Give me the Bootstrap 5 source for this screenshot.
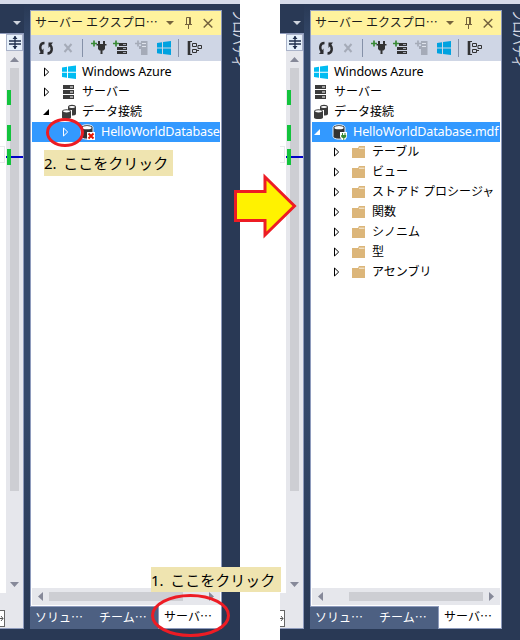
<!DOCTYPE html>
<html lang="ja">
<head>
<meta charset="utf-8">
<meta name="viewport" content="width=device-width, initial-scale=1">
<title>サーバー エクスプローラー</title>
<link href="https://cdn.jsdelivr.net/npm/bootstrap@5.3.0/dist/css/bootstrap.min.css" rel="stylesheet">
<style>
body{width:520px;height:640px;font-family:"Noto Sans","Noto Sans CJK JP",sans-serif;font-size:12px;line-height:20px;color:#000;background:#fff}
svg{display:block;flex:none}
.scene{width:240px;height:640px;background:#293955;border-top:4px solid #d6dbe9}
.editor{width:24px;height:625px}
.editor-menu{height:29px;padding:17px 0 0 13px}
.editor-body{height:596px;border:solid #8e9bbc;border-width:1px 1px 1px 0;background:#e6e7ec}
.code-edge{width:6px;flex:none}
.code-area{height:559px;background:#fff;padding-top:112px}
.code-box{height:17px;width:5px;border:1px solid #e9e9ec;border-left:0}
.corner-box{height:17px;width:5px;margin-top:17px;border:1px solid #666;border-left:0;background:#fff;padding-top:5px}
.split-btn{height:17px;width:17px;background:#e6f0fa;border:1px solid #aab3c9;padding-left:1px}
.splitter{width:6px;height:625px;background:linear-gradient(#293955 0,#34496b 40px,#34496b 400px,#293955)}
.panel-box{width:192px;margin-top:6px;height:619px}
.frame{height:596px;border:1px solid #8e9bbc;border-bottom:0;background:#fff}
.titlebar{height:24px;background:#fff29d;padding-left:4px;line-height:24px;color:#1b1b1b}
.title-text{width:130px}
.tools{height:26px;background:#cfd6e5}
.tree{height:527px;padding:1px 1px 0 1px;background:#fff}
.tree-row{height:20px}
.tree-row.sel{background:#3399ff;color:#fff}
.caret{width:8px;margin-right:10px}
.pic{width:16px;margin-right:5px}
.lv1{padding-left:11px}.lv2{padding-left:30px}
.shifted .lv1{padding-left:1px}.shifted .lv2{padding-left:2px}.shifted .lv3{padding-left:21px}
.azure{font-size:12.6px;letter-spacing:-.1px}
.dbname{font-size:12.6px;letter-spacing:-.16px}
.hbar{height:17px;margin:0 1px;background:#e6e7ec}
.hthumb{height:9px;width:134px;background:#cdced3}
.tabs{height:23px;background:#4d6082;border-top:1px solid #8e9bbc;color:#fff;line-height:22px}
.tab-a{width:64px;padding-left:5px}
.tab-on{width:63px;height:23px;margin-top:-1px;padding-left:5px;background:#fff;color:#000;border:1px solid #8e9bbc;border-top:0}
.side{width:18px;height:80px;padding:5px 0 0 9px}
.side span{writing-mode:vertical-rl;text-orientation:sideways;line-height:16px;font-size:13px;letter-spacing:-1.2px;color:#d4d8e2;white-space:nowrap}
.marks{left:0;top:0;pointer-events:none}
.note{background:#efe4b0;line-height:26px;font-size:15px;word-spacing:2.7px;white-space:nowrap}
.note-a{left:44px;top:150px;width:129px;height:26px}
.note-b{left:151px;top:567px;width:130px;height:25px}
</style>
<script src="https://cdn.jsdelivr.net/npm/bootstrap@5.3.0/dist/js/bootstrap.bundle.min.js"></script>
</head>
<body class="position-relative overflow-hidden">
<svg width="0" height="0" class="position-absolute">
<defs>
<symbol id="closed" viewBox="0 0 8 10"><path d="M1.500 1v8L5.700 5z" fill="none" stroke="currentColor"/></symbol>
<symbol id="open" viewBox="0 0 8 10"><path d="M6 2v6H0z" fill="currentColor"/></symbol>
<symbol id="win" viewBox="0 0 16 16"><path d="M1 3.500l5-.8v5H1zM7 2.500L15 1.400v6.300H7zM1 8.700h5v5l-5-.8zM7 8.700h8V15l-8-1.100z"/></symbol>
<symbol id="server" viewBox="0 0 16 16"><path fill="#3c3c3c" d="M2 1h11v4H2zM2 6h11v4H2zM2 11h11v4H2z"/><path d="M9 3h3M9 8h3M9 13h3" stroke="#fff"/></symbol>
<symbol id="data" viewBox="0 0 16 16"><path fill="#3c3c3c" d="M7 3c0-3 8-3 8 0v7c0 1.500-4 1.500-4 1.500V6H7z"/><ellipse cx="11" cy="2.900" rx="3" ry="1" fill="#fff"/><path fill="#3c3c3c" d="M1 7.500c0-3 9-3 9 0v6c0 2-9 2-9 0z"/><ellipse cx="5.500" cy="7.300" rx="3.400" ry="1.100" fill="#fff"/></symbol>
<symbol id="db" viewBox="0 0 16 16"><path d="M1 3.500C1-.2 13-.2 13 3.500v9c0 3.500-12 3.500-12 0z" fill="#333" stroke="#e9f3ff"/><ellipse cx="7" cy="3.700" rx="4.600" ry="1.600" fill="#fff"/></symbol>
<symbol id="dbx" viewBox="0 0 16 16"><use href="#db"/><path d="M7 8h8v8H7z" fill="#fff"/><path d="M8.500 9.500l5 5m0-5l-5 5" stroke="#e51400" stroke-width="2"/></symbol>
<symbol id="dbok" viewBox="0 0 16 16"><use href="#db"/><path d="M8 8h7v5l-2 3h-3l-2-3z" fill="#fff"/><path d="M9.200 11h5v2l-1.500 1h-2l-1.500-1zM10 9h1v2h-1zM12.500 9h1v2h-1zM11.300 14h1v2h-1z" fill="#388a34"/></symbol>
<symbol id="folder" viewBox="0 0 16 16"><path fill="#dcb67a" d="M1 4h6l1-2h6v12H1z"/><path d="M8 4.200h5.500" stroke="#fff" stroke-width=".8"/></symbol>
<symbol id="titleicons" viewBox="0 0 54 24"><g fill="none" stroke="#75633d"><path d="M21.500 13V6.500h4V13M24.500 7v6M20 13.500h7M23.500 14v4"/><path d="M38.700 8l8.600 8.500m0-8.500l-8.600 8.500" stroke-width="1.500"/></g><path d="M1 10h8l-4 4z" fill="#75633d"/></symbol>
<symbol id="toolicons" viewBox="0 0 190 26">
<g fill="none" stroke="#2d2d30" stroke-width="2.400"><path d="M13.500 8c-5 0-5.500 6-2 9.500M16.500 18.500c5 0 5.500-6 2-9.500"/></g><path d="M12.500 13.500v5.500H8zM17.500 13V7.500H22z" fill="#2d2d30"/>
<path d="M33.500 9l7 8m0-8l-7 8" stroke="#a5abb8" stroke-width="2"/>
<path d="M51.500 4v18M147.500 4v18" stroke="#8591a8"/>
<path d="M60 8.500h6M63 5.500v6M82 8.500h6M85 5.500v6" stroke="#388a34" stroke-width="1.700"/>
<path d="M67 6h2v3h3V6h2v3h1.500v1.500H74V14l-1.500 1.500h-1V19h-2v-3.500h-1L67 14v-3.500h-1.500V9H67z" fill="#333"/>
<path d="M88 8h8v3h-8zM86 12h10v3H86zM86 16h10v3H86z" fill="#333"/><path d="M92 9.500h3M92 13.500h3M92 17.500h3" stroke="#cfd6e5" stroke-width=".7"/>
<path d="M110 6h6.500v14h-6.500v-6h-2v-3h2z" fill="#a5abb8"/><path d="M104 8.500h6M107 5.500v6" stroke="#a5abb8" stroke-width="1.700"/><path d="M111 8.500h4M111 11.500h4" stroke="#dfe3ec"/>
<path d="M126 8l5-.8v5.300h-5zM132 7l8-1v6.500h-8zM126 13.500h5v5.500l-5-.8zM132 13.500h8V20l-8-1z" fill="#00a2e0"/>
<path d="M158 6v14" stroke="#333" stroke-width="2.600"/><g fill="none" stroke="#333"><path d="M159 6.500h2M159 19.500h2M161.500 8.500h4v3h-4zM167 10.500h3.500v3H167zM161.500 14.500h4v3h-4zM166 15.500h2"/></g>
</symbol>
<symbol id="vbar" viewBox="0 0 17 577">
<path d="M4 17h9v423H4z" fill="#cdced3"/><path d="M4 11l4.500-5 4.500 5zM4 531h9l-4.500 5z" fill="#868999"/>
<path d="M1 39h4v15H1zM1 74h4v16H1zM1 98h4v16H1z" fill="#13c33c"/><path d="M0 106h1M5 106h12" stroke="#0000c8" stroke-width="2"/>
</symbol>
<symbol id="split" viewBox="0 0 14 15"><path d="M1 6h12M1 9h12M7 1v13" stroke="#1e2d4b" stroke-width="1.300"/><path d="M4.500 4L7 1l2.500 3zM4.500 11L7 14l2.500-3z" fill="#1e2d4b"/></symbol>
</defs>
</svg>

<main class="d-flex justify-content-between">
<section class="scene d-flex overflow-hidden">
  <div class="editor flex-shrink-0">
    <div class="editor-menu"><svg width="8" height="4"><path d="M0 0h8L4 4z" fill="#ced4dd"/></svg></div>
    <div class="editor-body d-flex">
      <div class="code-edge"><div class="code-area"><div class="code-box"></div></div><div class="corner-box"><svg width="4" height="5"><path d="M0 2.500h3M1 0l2 2.500L1 5" stroke="#555" fill="none"/></svg></div></div>
      <div class="flex-shrink-0"><div class="split-btn"><svg width="14" height="15"><use href="#split"/></svg></div><svg width="17" height="577"><use href="#vbar"/></svg></div>
    </div>
  </div>
  <div class="splitter flex-shrink-0"></div>
  <div class="panel-box flex-shrink-0">
    <div class="frame">
      <div class="titlebar d-flex"><div class="title-text text-nowrap">サーバー エクスプロ⋯</div><svg width="54" height="24"><use href="#titleicons"/></svg></div>
      <div class="tools"><svg width="190" height="26"><use href="#toolicons"/></svg></div>
      <div class="tree text-nowrap">
        <div class="tree-row lv1 d-flex align-items-center"><svg class="caret" height="10"><use href="#closed"/></svg><svg class="pic" height="16" fill="#00bcf2"><use href="#win"/></svg><span class="azure">Windows Azure</span></div>
        <div class="tree-row lv1 d-flex align-items-center"><svg class="caret" height="10"><use href="#closed"/></svg><svg class="pic" height="16"><use href="#server"/></svg><span>サーバー</span></div>
        <div class="tree-row lv1 d-flex align-items-center"><svg class="caret" height="10"><use href="#open"/></svg><svg class="pic" height="16"><use href="#data"/></svg><span>データ接続</span></div>
        <div class="tree-row lv2 sel d-flex align-items-center"><svg class="caret" height="10"><use href="#closed"/></svg><svg class="pic" height="16"><use href="#dbx"/></svg><span class="dbname">HelloWorldDatabase</span></div>
      </div>
      <div class="hbar d-flex align-items-center"><svg width="17" height="9"><path d="M11 0v9L6 4.500z" fill="#868999"/></svg><div class="hthumb"></div><svg class="ms-auto" width="11" height="9"><path d="M0 0v9l5-4.500z" fill="#868999"/></svg></div>
    </div>
    <div class="tabs d-flex text-nowrap"><div class="tab-a">ソリュ⋯</div><div class="tab-a">チーム⋯</div><div class="tab-on flex-grow-1">サーバ⋯</div></div>
  </div>
  <div class="side flex-shrink-0"><span>プロパティ</span></div>
</section>

<section class="scene d-flex overflow-hidden shifted">
  <div class="editor flex-shrink-0">
    <div class="editor-menu"><svg width="8" height="4"><path d="M0 0h8L4 4z" fill="#ced4dd"/></svg></div>
    <div class="editor-body d-flex">
      <div class="code-edge"><div class="code-area"><div class="code-box"></div></div><div class="corner-box"><svg width="4" height="5"><path d="M0 2.500h3M1 0l2 2.500L1 5" stroke="#555" fill="none"/></svg></div></div>
      <div class="flex-shrink-0"><div class="split-btn"><svg width="14" height="15"><use href="#split"/></svg></div><svg width="17" height="577"><use href="#vbar"/></svg></div>
    </div>
  </div>
  <div class="splitter flex-shrink-0"></div>
  <div class="panel-box flex-shrink-0">
    <div class="frame">
      <div class="titlebar d-flex"><div class="title-text text-nowrap">サーバー エクスプロ⋯</div><svg width="54" height="24"><use href="#titleicons"/></svg></div>
      <div class="tools"><svg width="190" height="26"><use href="#toolicons"/></svg></div>
      <div class="tree text-nowrap">
        <div class="tree-row lv1 d-flex align-items-center"><svg class="pic" height="16" fill="#00bcf2"><use href="#win"/></svg><span class="azure">Windows Azure</span></div>
        <div class="tree-row lv1 d-flex align-items-center"><svg class="pic" height="16"><use href="#server"/></svg><span>サーバー</span></div>
        <div class="tree-row lv1 d-flex align-items-center"><svg class="pic" height="16"><use href="#data"/></svg><span>データ接続</span></div>
        <div class="tree-row lv2 sel d-flex align-items-center"><svg class="caret" height="10"><use href="#open"/></svg><svg class="pic" height="16"><use href="#dbok"/></svg><span class="dbname">HelloWorldDatabase.mdf</span></div>
        <div class="tree-row lv3 d-flex align-items-center"><svg class="caret" height="10"><use href="#closed"/></svg><svg class="pic" height="16"><use href="#folder"/></svg><span>テーブル</span></div>
        <div class="tree-row lv3 d-flex align-items-center"><svg class="caret" height="10"><use href="#closed"/></svg><svg class="pic" height="16"><use href="#folder"/></svg><span>ビュー</span></div>
        <div class="tree-row lv3 d-flex align-items-center"><svg class="caret" height="10"><use href="#closed"/></svg><svg class="pic" height="16"><use href="#folder"/></svg><span>ストアド プロシージャ</span></div>
        <div class="tree-row lv3 d-flex align-items-center"><svg class="caret" height="10"><use href="#closed"/></svg><svg class="pic" height="16"><use href="#folder"/></svg><span>関数</span></div>
        <div class="tree-row lv3 d-flex align-items-center"><svg class="caret" height="10"><use href="#closed"/></svg><svg class="pic" height="16"><use href="#folder"/></svg><span>シノニム</span></div>
        <div class="tree-row lv3 d-flex align-items-center"><svg class="caret" height="10"><use href="#closed"/></svg><svg class="pic" height="16"><use href="#folder"/></svg><span>型</span></div>
        <div class="tree-row lv3 d-flex align-items-center"><svg class="caret" height="10"><use href="#closed"/></svg><svg class="pic" height="16"><use href="#folder"/></svg><span>アセンブリ</span></div>
      </div>
      <div class="hbar d-flex align-items-center"><svg width="17" height="9"><path d="M11 0v9L6 4.500z" fill="#868999"/></svg><div class="hthumb ms-auto me-1"></div><svg width="13" height="9"><path d="M2 0v9l5-4.500z" fill="#868999"/></svg></div>
    </div>
    <div class="tabs d-flex text-nowrap"><div class="tab-a">ソリュ⋯</div><div class="tab-a">チーム⋯</div><div class="tab-on flex-grow-1">サーバ⋯</div></div>
  </div>
  <div class="side flex-shrink-0"><span>プロパティ</span></div>
</section>
</main>

<div class="note note-a position-absolute">2. ここをクリック</div>
<div class="note note-b position-absolute">1. ここをクリック</div>
<svg class="marks position-absolute" width="520" height="640" fill="none" stroke="#ed1c24" stroke-width="3">
<ellipse cx="65" cy="132.500" rx="17.500" ry="13"/>
<ellipse cx="190.500" cy="615.500" rx="38" ry="20"/>
<path d="M235.500 191.500H265V177l29.500 29L265 235v-14.500h-29.500z" fill="#fff200"/>
</svg>
</body>
</html>
